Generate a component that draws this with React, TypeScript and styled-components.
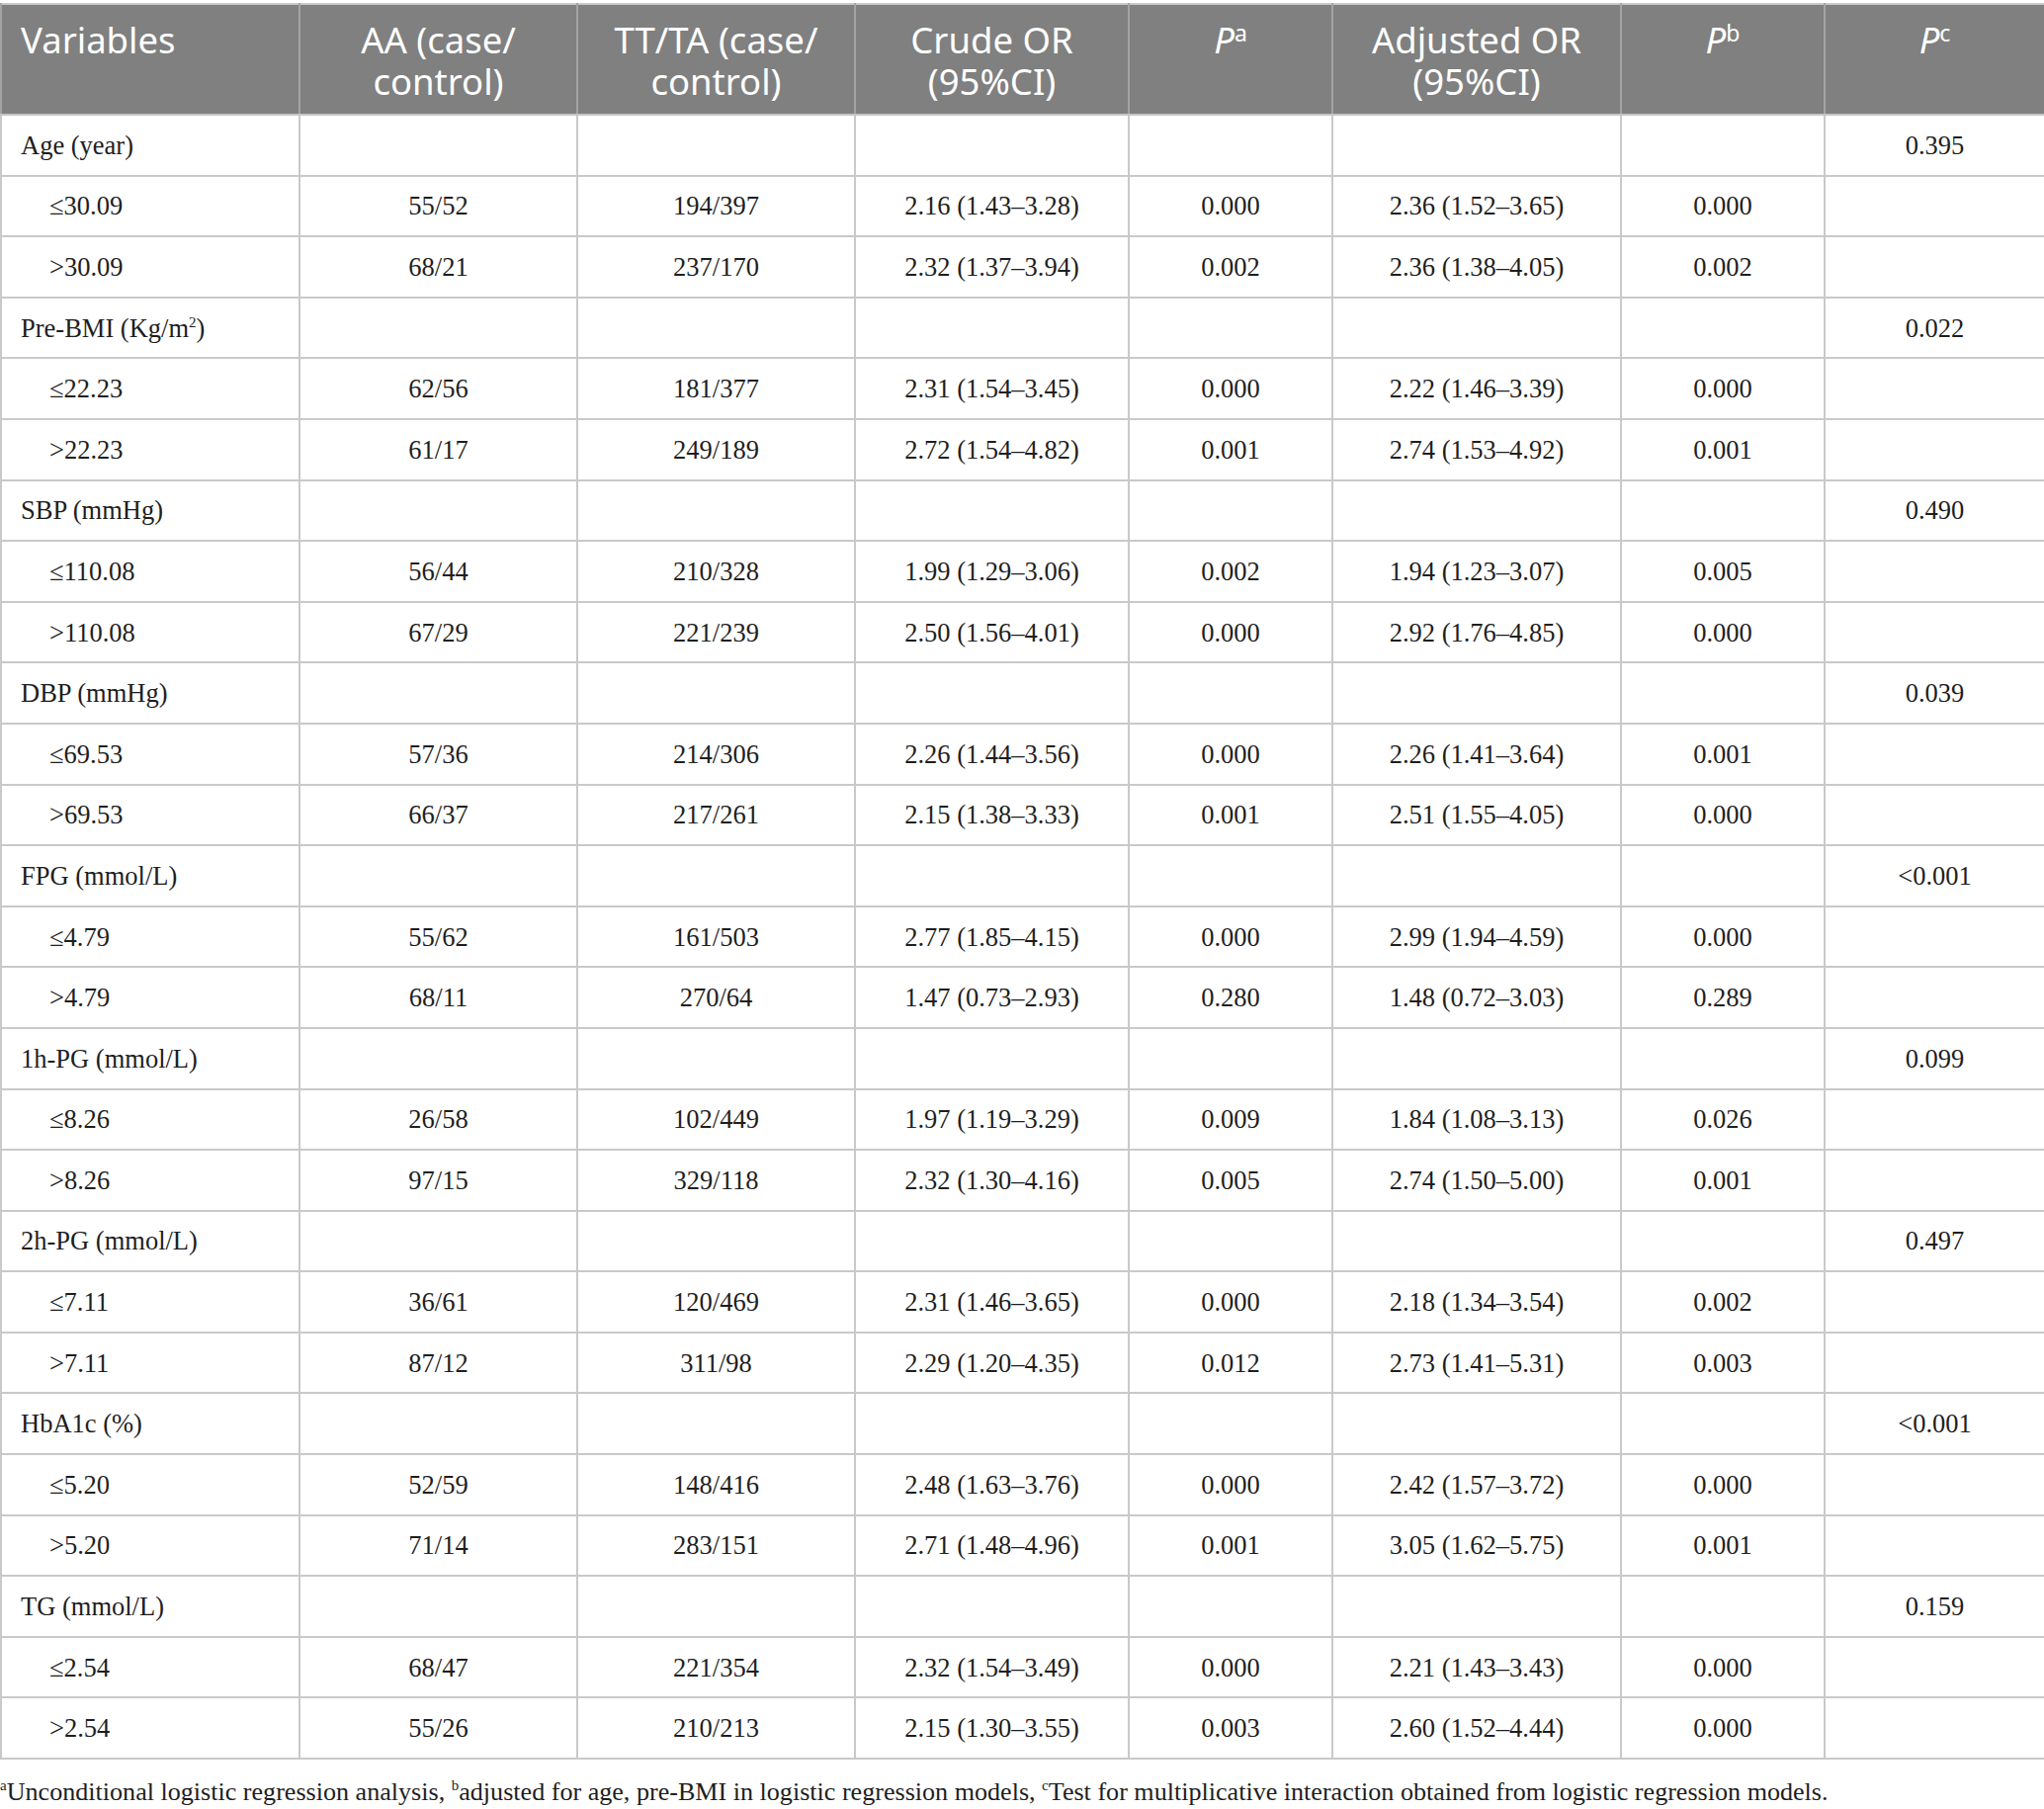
import React from 'react'
import styled, { createGlobalStyle } from 'styled-components'

interface ISubRow {
	label: string
	aa: string
	tt: string
	crude: string
	pa: string
	adjusted: string
	pb: string
}

interface IGroup {
	name: React.ReactNode
	pc: string
	rows: ISubRow[]
}

const row = (label: string, aa: string, tt: string, crude: string, pa: string, adjusted: string, pb: string): ISubRow =>
	({ label, aa, tt, crude, pa, adjusted, pb })

const groups: IGroup[] = [
	{
		name: 'Age (year)', pc: '0.395', rows: [
			row('≤30.09', '55/52', '194/397', '2.16 (1.43–3.28)', '0.000', '2.36 (1.52–3.65)', '0.000'),
			row('>30.09', '68/21', '237/170', '2.32 (1.37–3.94)', '0.002', '2.36 (1.38–4.05)', '0.002'),
		]
	},
	{
		name: <>Pre-BMI (Kg/m<sup>2</sup>)</>, pc: '0.022', rows: [
			row('≤22.23', '62/56', '181/377', '2.31 (1.54–3.45)', '0.000', '2.22 (1.46–3.39)', '0.000'),
			row('>22.23', '61/17', '249/189', '2.72 (1.54–4.82)', '0.001', '2.74 (1.53–4.92)', '0.001'),
		]
	},
	{
		name: 'SBP (mmHg)', pc: '0.490', rows: [
			row('≤110.08', '56/44', '210/328', '1.99 (1.29–3.06)', '0.002', '1.94 (1.23–3.07)', '0.005'),
			row('>110.08', '67/29', '221/239', '2.50 (1.56–4.01)', '0.000', '2.92 (1.76–4.85)', '0.000'),
		]
	},
	{
		name: 'DBP (mmHg)', pc: '0.039', rows: [
			row('≤69.53', '57/36', '214/306', '2.26 (1.44–3.56)', '0.000', '2.26 (1.41–3.64)', '0.001'),
			row('>69.53', '66/37', '217/261', '2.15 (1.38–3.33)', '0.001', '2.51 (1.55–4.05)', '0.000'),
		]
	},
	{
		name: 'FPG (mmol/L)', pc: '<0.001', rows: [
			row('≤4.79', '55/62', '161/503', '2.77 (1.85–4.15)', '0.000', '2.99 (1.94–4.59)', '0.000'),
			row('>4.79', '68/11', '270/64', '1.47 (0.73–2.93)', '0.280', '1.48 (0.72–3.03)', '0.289'),
		]
	},
	{
		name: '1h-PG (mmol/L)', pc: '0.099', rows: [
			row('≤8.26', '26/58', '102/449', '1.97 (1.19–3.29)', '0.009', '1.84 (1.08–3.13)', '0.026'),
			row('>8.26', '97/15', '329/118', '2.32 (1.30–4.16)', '0.005', '2.74 (1.50–5.00)', '0.001'),
		]
	},
	{
		name: '2h-PG (mmol/L)', pc: '0.497', rows: [
			row('≤7.11', '36/61', '120/469', '2.31 (1.46–3.65)', '0.000', '2.18 (1.34–3.54)', '0.002'),
			row('>7.11', '87/12', '311/98', '2.29 (1.20–4.35)', '0.012', '2.73 (1.41–5.31)', '0.003'),
		]
	},
	{
		name: 'HbA1c (%)', pc: '<0.001', rows: [
			row('≤5.20', '52/59', '148/416', '2.48 (1.63–3.76)', '0.000', '2.42 (1.57–3.72)', '0.000'),
			row('>5.20', '71/14', '283/151', '2.71 (1.48–4.96)', '0.001', '3.05 (1.62–5.75)', '0.001'),
		]
	},
	{
		name: 'TG (mmol/L)', pc: '0.159', rows: [
			row('≤2.54', '68/47', '221/354', '2.32 (1.54–3.49)', '0.000', '2.21 (1.43–3.43)', '0.000'),
			row('>2.54', '55/26', '210/213', '2.15 (1.30–3.55)', '0.003', '2.60 (1.52–4.44)', '0.000'),
		]
	},
]

const columnWidths = [302, 281, 281, 277, 206, 292, 206, 223]

export default function App() {
	return (
		<>
			<GlobalStyle />
			<StyledPage>
				<StyledTable>
					<colgroup>
						{columnWidths.map((w, i) => <col key={i} style={{ width: w }} />)}
					</colgroup>
					<thead>
						<tr>
							<StyledHeadCell alignLeft>Variables</StyledHeadCell>
							<StyledHeadCell>AA (case/<br />control)</StyledHeadCell>
							<StyledHeadCell>TT/TA (case/<br />control)</StyledHeadCell>
							<StyledHeadCell>Crude OR<br />(95%CI)</StyledHeadCell>
							<StyledHeadCell><em>P</em><sup>a</sup></StyledHeadCell>
							<StyledHeadCell>Adjusted OR<br />(95%CI)</StyledHeadCell>
							<StyledHeadCell><em>P</em><sup>b</sup></StyledHeadCell>
							<StyledHeadCell><em>P</em><sup>c</sup></StyledHeadCell>
						</tr>
					</thead>
					<tbody>
						{groups.map((group, gi) => (
							<React.Fragment key={gi}>
								<tr>
									<StyledCell alignLeft>{group.name}</StyledCell>
									<StyledCell />
									<StyledCell />
									<StyledCell />
									<StyledCell />
									<StyledCell />
									<StyledCell />
									<StyledCell>{group.pc}</StyledCell>
								</tr>
								{group.rows.map((r, ri) => (
									<tr key={ri}>
										<StyledCell alignLeft indent>{r.label}</StyledCell>
										<StyledCell>{r.aa}</StyledCell>
										<StyledCell>{r.tt}</StyledCell>
										<StyledCell>{r.crude}</StyledCell>
										<StyledCell>{r.pa}</StyledCell>
										<StyledCell>{r.adjusted}</StyledCell>
										<StyledCell>{r.pb}</StyledCell>
										<StyledCell />
									</tr>
								))}
							</React.Fragment>
						))}
					</tbody>
				</StyledTable>
				<StyledFootnote>
					<sup>a</sup>Unconditional logistic regression analysis, <sup>b</sup>adjusted for age, pre-BMI in logistic regression models, <sup>c</sup>Test for multiplicative interaction obtained from logistic regression models.
				</StyledFootnote>
			</StyledPage>
		</>
	)
}

const GlobalStyle = createGlobalStyle`
	html, body {
		margin: 0;
		padding: 0;
		background: #ffffff;
	}
`

const StyledPage = styled.div`
	width: 2068px;
	padding-top: 3px;
	font-family: "Liberation Serif", "Times New Roman", serif;
	color: #1e1e1e;
`

const StyledTable = styled.table`
	width: 2068px;
	table-layout: fixed;
	border-collapse: collapse;
	border: 2px solid #c9c9c9;
`

interface IAlignProps {
	alignLeft?: boolean
	indent?: boolean
}

const StyledHeadCell = styled.th<IAlignProps>`
	height: 110px;
	box-sizing: border-box;
	padding: 14px 4px 12px ${(props: IAlignProps) => props.alignLeft ? '19px' : '4px'};
	vertical-align: top;
	text-align: ${(props: IAlignProps) => props.alignLeft ? 'left' : 'center'};
	background: #7f807f;
	color: #ffffff;
	font-family: "Noto Sans", "Open Sans", sans-serif;
	font-size: 36.5px;
	font-weight: 400;
	line-height: 42px;
	white-space: nowrap;
	border-left: 2px solid #a3a4a3;
	border-bottom: 2px solid #c4c4c4;

	> sup {
		font-size: 23px;
		vertical-align: 12px;
		line-height: 0;
	}
`

const StyledCell = styled.td<IAlignProps>`
	height: 61.6px;
	box-sizing: border-box;
	padding: 0 6px 0 ${(props: IAlignProps) => props.indent ? '48px' : props.alignLeft ? '19px' : '6px'};
	vertical-align: middle;
	text-align: ${(props: IAlignProps) => props.alignLeft ? 'left' : 'center'};
	font-size: 26.5px;
	line-height: 30px;
	white-space: nowrap;
	border: 2px solid #c9c9c9;

	> sup {
		font-size: 15px;
		vertical-align: 10px;
		line-height: 0;
	}
`

const StyledFootnote = styled.p`
	margin: 18px 0 0;
	font-size: 26.1px;
	line-height: 30px;
	white-space: nowrap;

	> sup {
		font-size: 15px;
		vertical-align: 10px;
		line-height: 0;
	}
`
